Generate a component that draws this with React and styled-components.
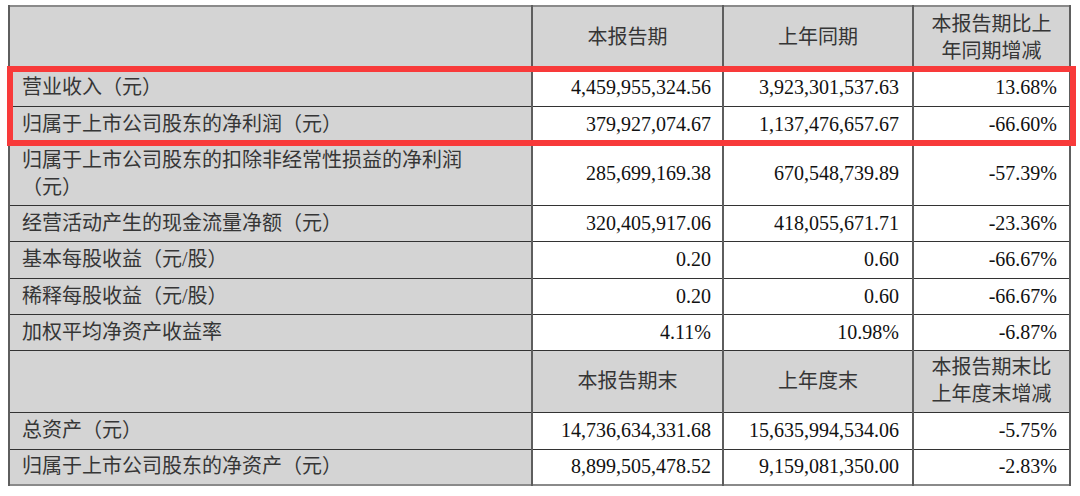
import React from 'react'
import styled, { createGlobalStyle } from 'styled-components'

const GlobalStyle = createGlobalStyle`
	html, body {
		margin: 0;
		padding: 0;
		background: #ffffff;
	}
	body {
		width: 1080px;
		height: 496px;
		overflow: hidden;
	}
`

const periodRows = [
	{ label: '营业收入（元）', cur: '4,459,955,324.56', prev: '3,923,301,537.63', diff: '13.68%', h: 37 },
	{ label: '归属于上市公司股东的净利润（元）', cur: '379,927,074.67', prev: '1,137,476,657.67', diff: '-66.60%', h: 36 },
	{ label: ['归属于上市公司股东的扣除非经常性损益的净利润', '（元）'], cur: '285,699,169.38', prev: '670,548,739.89', diff: '-57.39%', h: 63 },
	{ label: '经营活动产生的现金流量净额（元）', cur: '320,405,917.06', prev: '418,055,671.71', diff: '-23.36%', h: 36 },
	{ label: '基本每股收益（元/股）', cur: '0.20', prev: '0.60', diff: '-66.67%', h: 37 },
	{ label: '稀释每股收益（元/股）', cur: '0.20', prev: '0.60', diff: '-66.67%', h: 36 },
	{ label: '加权平均净资产收益率', cur: '4.11%', prev: '10.98%', diff: '-6.87%', h: 36 },
]

const endRows = [
	{ label: '总资产（元）', cur: '14,736,634,331.68', prev: '15,635,994,534.06', diff: '-5.75%', h: 37 },
	{ label: '归属于上市公司股东的净资产（元）', cur: '8,899,505,478.52', prev: '9,159,081,350.00', diff: '-2.83%', h: 36 },
]

const Lines = ({ text }) =>
	Array.isArray(text)
		? text.map((t, i) => (
				<React.Fragment key={i}>
					{i > 0 && <br />}
					{t}
				</React.Fragment>
		  ))
		: text

const HeaderRow = ({ cols, h }) => (
	<Row $h={h}>
		<LabelCell />
		{cols.map((c, i) => (
			<HeadCell key={i}>
				<Lines text={c} />
			</HeadCell>
		))}
	</Row>
)

const DataRow = ({ row }) => (
	<Row $h={row.h}>
		<LabelCell>
			<Lines text={row.label} />
		</LabelCell>
		<NumCell>{row.cur}</NumCell>
		<NumCell $pr={13}>{row.prev}</NumCell>
		<NumCell $pr={12}>{row.diff}</NumCell>
	</Row>
)

export default function App() {
	return (
		<>
			<GlobalStyle />
			<Page>
				<Sheet>
					<Table>
						<colgroup>
							<col style={{ width: 523 }} />
							<col style={{ width: 191 }} />
							<col style={{ width: 190 }} />
							<col style={{ width: 157 }} />
						</colgroup>
						<tbody>
							<HeaderRow h={63} cols={['本报告期', '上年同期', ['本报告期比上', '年同期增减']]} />
							{periodRows.map((r, i) => (
								<DataRow key={'p' + i} row={r} />
							))}
							<HeaderRow h={62} cols={['本报告期末', '上年度末', ['本报告期末比', '上年度末增减']]} />
							{endRows.map((r, i) => (
								<DataRow key={'e' + i} row={r} />
							))}
						</tbody>
					</Table>
					<Highlight />
				</Sheet>
			</Page>
		</>
	)
}

const Page = styled('div')`
	padding: 5px 0 0 8px;
`

const Sheet = styled('div')`
	position: relative;
	width: 1061px;
`

const Table = styled('table')`
	border-collapse: collapse;
	table-layout: fixed;
	width: 1061px;
	border: 2px solid #8a8a8a;
	font-size: 20px;
	color: #1e1e1e;
`

const Row = styled('tr')`
	height: ${(p) => p.$h}px;
`

const Cell = styled('td')`
	box-sizing: border-box;
	border-top: 1px solid #333333;
	border-bottom: 1px solid #333333;
	border-left: 2px solid #5e5e5e;
	border-right: 2px solid #5e5e5e;
	vertical-align: middle;
	line-height: 27px;
	padding: 0 12px;
`

const LabelCell = styled(Cell)`
	background: #d4d4d4;
	text-align: left;
	font-family: 'Liberation Serif', 'Noto Sans CJK SC', serif;
	color: #363636;
	padding-left: 12px;
`

const HeadCell = styled(Cell)`
	background: #d4d4d4;
	text-align: center;
	font-family: 'Liberation Serif', 'Noto Sans CJK SC', serif;
	color: #363636;
	padding: 0 4px;
`

const NumCell = styled(Cell)`
	background: #ffffff;
	text-align: right;
	font-family: 'Liberation Serif', 'Times New Roman', serif;
	color: #111111;
	padding-right: ${(p) => p.$pr || 11}px;
`

const Highlight = styled('div')`
	position: absolute;
	left: -1px;
	top: 61px;
	width: 1069px;
	height: 80px;
	box-sizing: border-box;
	border: 6px solid #f83a3a;
	pointer-events: none;
`
